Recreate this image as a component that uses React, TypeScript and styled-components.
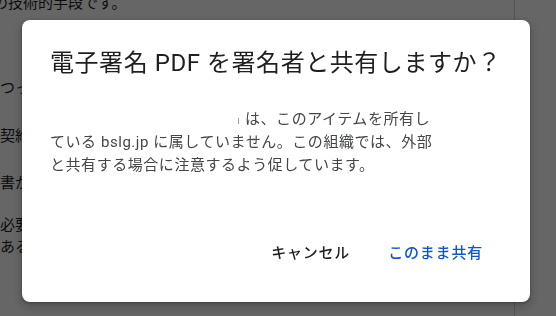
import styled, { createGlobalStyle } from "styled-components";

const GlobalStyle = createGlobalStyle`
  html, body {
    margin: 0;
    padding: 0;
    width: 556px;
    height: 316px;
    overflow: hidden;
    background: #ffffff;
  }
  body {
    font-family: Roboto, "Noto Sans CJK JP", sans-serif;
  }
`;

const Page = styled.div`
  width: 514px;
  height: 316px;
  border-right: 1px solid #d4d4d4;
  overflow: hidden;
  font-size: 15px;
  line-height: 22px;
  color: #1f1f1f;
`;

const Paragraph = styled.p<{ $top: number; $indent?: number }>`
  margin: ${(p) => p.$top}px 0 0 ${(p) => p.$indent ?? 0}px;
  white-space: nowrap;
`;

const Scrim = styled.div`
  position: fixed;
  inset: 0;
  background: rgba(0, 0, 0, 0.6);
  display: flex;
  align-items: flex-start;
  justify-content: flex-start;
  padding: 20px 0 0 22px;
`;

const Dialog = styled.div`
  width: 508px;
  height: 282px;
  box-sizing: border-box;
  background: #ffffff;
  border-radius: 8px;
  box-shadow: 0 4px 8px 3px rgba(0, 0, 0, 0.15), 0 1px 3px rgba(0, 0, 0, 0.3);
  display: flex;
  flex-direction: column;
  padding: 27px 24px 31px 28px;
`;

const Title = styled.h2`
  margin: 0;
  font-size: 24px;
  line-height: 32px;
  font-weight: 400;
  letter-spacing: 0.55px;
  color: #1f1f1f;
  white-space: nowrap;
`;

const Body = styled.p`
  margin: 29px 0 0;
  font-size: 15px;
  line-height: 23px;
  letter-spacing: 0.55px;
  color: #444746;
  white-space: nowrap;
`;

const Redacted = styled.span`
  display: inline-block;
  width: 195px;
  height: 14px;
  position: relative;
  vertical-align: middle;

  &::after {
    content: "";
    position: absolute;
    right: 6px;
    top: 5px;
    width: 1px;
    height: 6px;
    background: #9a9a9a;
  }
`;

const Actions = styled.div`
  margin-top: auto;
  display: flex;
  justify-content: flex-end;
  gap: 14px;
  padding-right: 11px;
`;

const Button = styled.button<{ $primary?: boolean }>`
  height: 40px;
  padding: 0 12px;
  border: none;
  border-radius: 20px;
  background: transparent;
  font-family: Roboto, "Noto Sans CJK JP", sans-serif;
  font-size: 15px;
  font-weight: 500;
  letter-spacing: 0.8px;
  color: ${(p) => (p.$primary ? "#0b57d0" : "#1f1f1f")};
  cursor: pointer;
`;

export default function App() {
  return (
    <>
      <GlobalStyle />
      <Page>
        <Paragraph $top={-8} $indent={-7}>の技術的手段です。</Paragraph>
        <Paragraph $top={63}>つって署名を行うことができます。</Paragraph>
        <Paragraph $top={26}>契約書などの文書に署名を依頼します。</Paragraph>
        <Paragraph $top={25}>書が完成すると通知が届きます。</Paragraph>
        <Paragraph $top={20}>
          必要に応じて署名者に再送信することが
          <br />
          あるので注意してください。
        </Paragraph>
      </Page>
      <Scrim>
        <Dialog role="dialog">
          <Title>電子署名 PDF を署名者と共有しますか？</Title>
          <Body>
            <Redacted />
            は、このアイテムを所有し
            <br />
            ている bslg.jp に属していません。この組織では、外部
            <br />
            と共有する場合に注意するよう促しています。
          </Body>
          <Actions>
            <Button>キャンセル</Button>
            <Button $primary>このまま共有</Button>
          </Actions>
        </Dialog>
      </Scrim>
    </>
  );
}
